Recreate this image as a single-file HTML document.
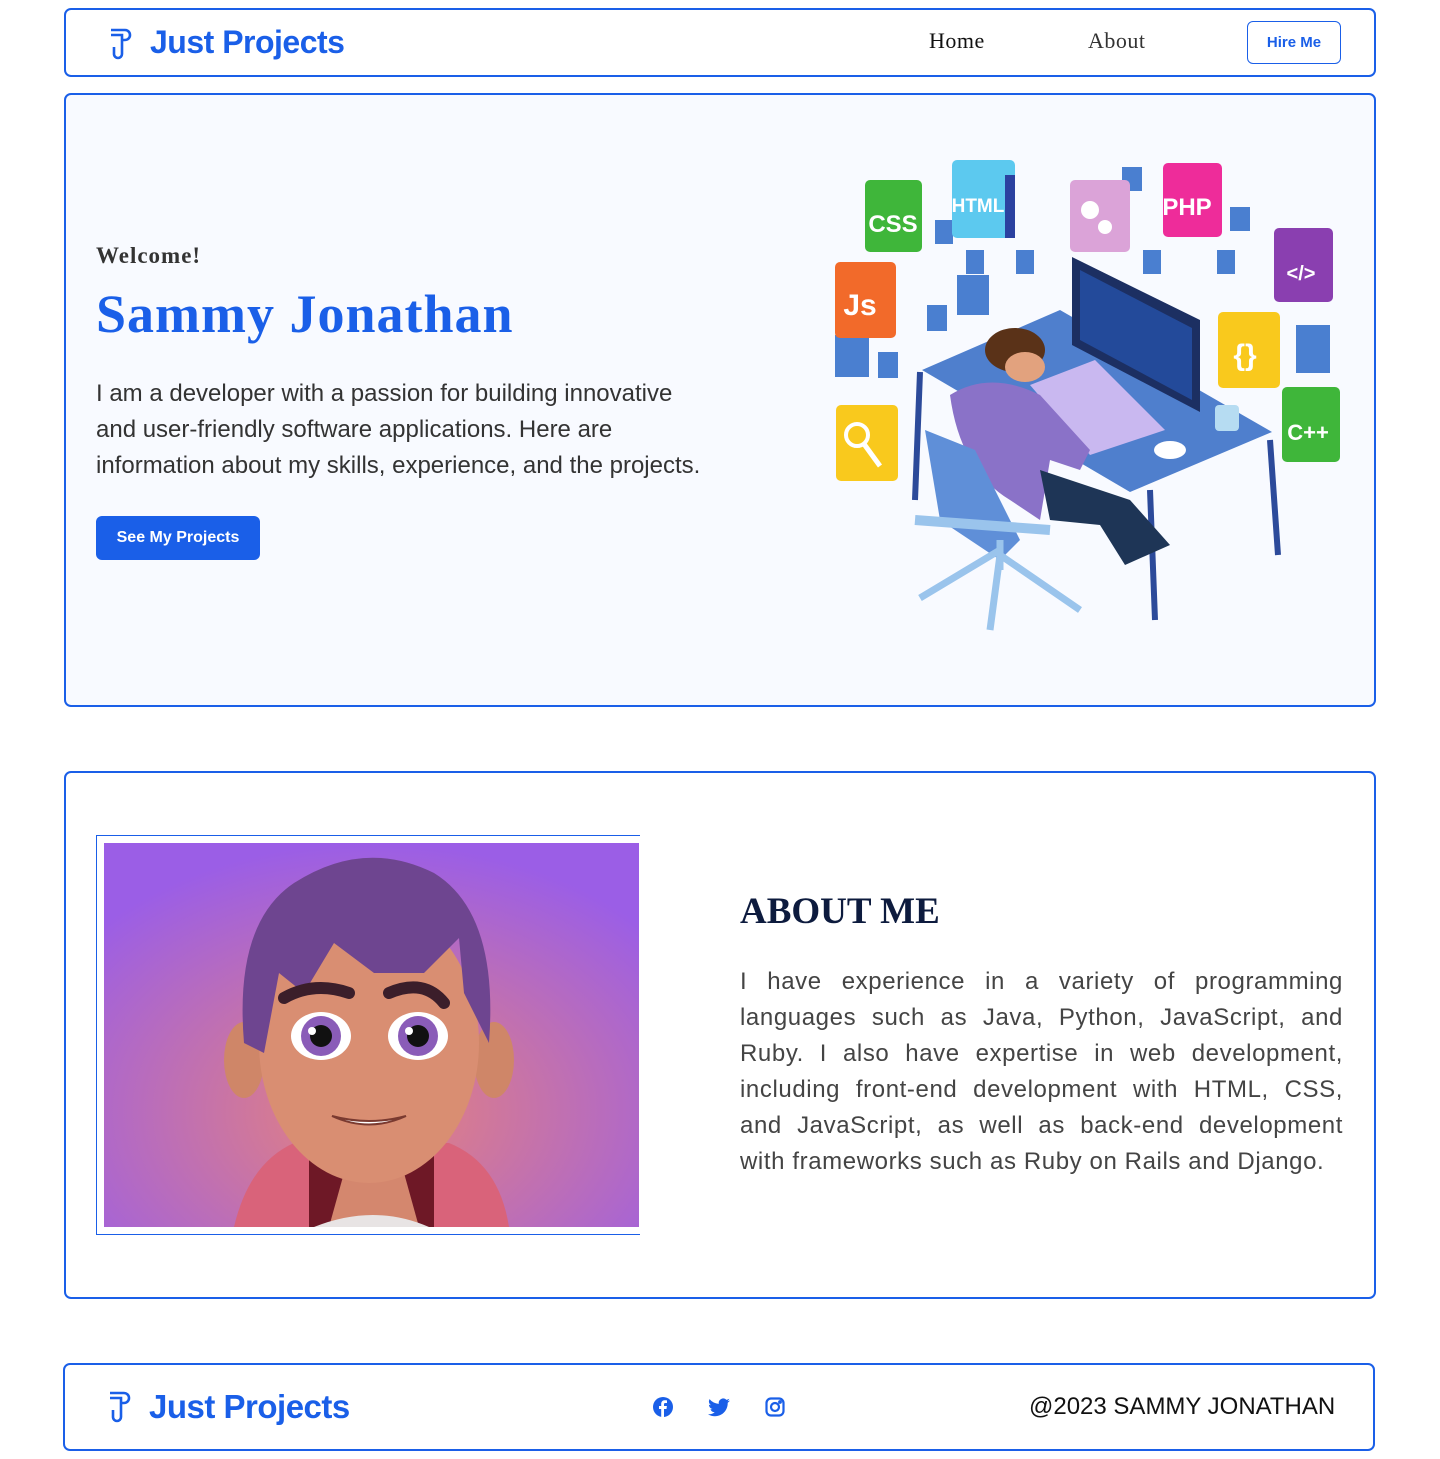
<!DOCTYPE html>
<html><head><meta charset="utf-8"><style>
*{margin:0;padding:0;box-sizing:border-box}
body{width:1440px;height:1459px;background:#fff;font-family:"Liberation Sans",sans-serif;position:relative;overflow:hidden}
.box{position:absolute;border:2px solid #1a5fe8;border-radius:7px}
.blue{color:#1a5fe8}
.serif{font-family:"Liberation Serif",serif}
.abs{position:absolute;white-space:nowrap}
</style></head><body>
<div class="box" style="left:64px;top:8px;width:1312px;height:69px"></div>
<svg class="abs" style="left:108px;top:27px" width="26" height="34" viewBox="0 0 26 34" fill="none" stroke="#1a5fe8" stroke-width="2.6"><path d="M3 3H17a5 5 0 0 1 0 10H14M3 8H14V27a4 4 0 0 1-8 0V20"/></svg>
<div class="abs blue" style="left:150px;top:24px;font-size:32px;font-weight:bold;letter-spacing:-0.5px">Just Projects</div>
<div class="abs serif" style="left:929px;top:28px;font-size:22px;color:#111;letter-spacing:0.5px">Home</div>
<div class="abs serif" style="left:1088px;top:28px;font-size:22px;color:#333;letter-spacing:0.5px">About</div>
<div class="abs blue" style="left:1247px;top:21px;width:94px;height:43px;border:1px solid #1a5fe8;border-radius:6px;font-size:15px;font-weight:bold;text-align:center;line-height:41px">Hire Me</div>

<div class="box" style="left:64px;top:93px;width:1312px;height:614px;background:#f8faff"></div>
<div class="abs serif" style="left:96px;top:243px;font-size:23px;font-weight:bold;color:#333;letter-spacing:1px">Welcome!</div>
<div class="abs serif blue" style="left:96px;top:283px;font-size:54px;font-weight:bold;letter-spacing:1px">Sammy Jonathan</div>
<div class="abs" style="left:96px;top:376px;font-size:24px;line-height:36px;color:#333">I am a developer with a passion for building innovative<br>and user-friendly software applications. Here are<br>information about my skills, experience, and the projects.</div>
<div class="abs" style="left:96px;top:516px;width:164px;height:44px;background:#1a5fe8;border-radius:6px;color:#fff;font-size:16px;font-weight:bold;text-align:center;line-height:44px">See My Projects</div>

<svg class="abs" style="left:0;top:0" width="1440" height="700" font-family="Liberation Sans" font-weight="bold">
<g fill="#4a7fd0">
<rect x="1122" y="167" width="20" height="24"/><rect x="935" y="220" width="18" height="24"/><rect x="966" y="250" width="18" height="24"/><rect x="1016" y="250" width="18" height="24"/><rect x="1143" y="250" width="18" height="24"/><rect x="1230" y="207" width="20" height="24"/><rect x="1217" y="250" width="18" height="24"/><rect x="957" y="275" width="32" height="40"/><rect x="927" y="305" width="20" height="26"/><rect x="835" y="335" width="34" height="42"/><rect x="878" y="352" width="20" height="26"/><rect x="1296" y="325" width="34" height="48"/>
</g>
<g>
<rect x="865" y="180" width="57" height="72" rx="5" fill="#3fb63a"/><text x="893" y="232" font-size="24" fill="#fff" text-anchor="middle">CSS</text>
<rect x="952" y="160" width="63" height="78" rx="5" fill="#5cc9ef"/><rect x="1005" y="175" width="10" height="63" fill="#2b41a0"/><text x="978" y="212" font-size="19" fill="#fff" text-anchor="middle">HTML</text>
<rect x="1070" y="180" width="60" height="72" rx="5" fill="#dba3d8"/><circle cx="1090" cy="210" r="9" fill="#fff"/><circle cx="1105" cy="227" r="7" fill="#fff"/>
<rect x="1163" y="163" width="59" height="74" rx="5" fill="#ee2c9a"/><text x="1187" y="215" font-size="24" fill="#fff" text-anchor="middle">PHP</text>
<rect x="1274" y="228" width="59" height="74" rx="5" fill="#8a3fb0"/><text x="1301" y="280" font-size="20" fill="#fff" text-anchor="middle">&lt;/&gt;</text>
<rect x="835" y="262" width="61" height="76" rx="5" fill="#f26a2a"/><text x="860" y="315" font-size="30" fill="#fff" text-anchor="middle">Js</text>
<rect x="1218" y="312" width="62" height="76" rx="5" fill="#f9c91d"/><text x="1245" y="365" font-size="30" fill="#fff" text-anchor="middle">{}</text>
<rect x="1282" y="387" width="58" height="75" rx="5" fill="#3fb63a"/><text x="1308" y="440" font-size="22" fill="#fff" text-anchor="middle">C++</text>
<rect x="836" y="405" width="62" height="76" rx="5" fill="#f9c91d"/><circle cx="857" cy="435" r="11" fill="none" stroke="#fff" stroke-width="4"/><path d="M864 444L880 466" stroke="#fff" stroke-width="5"/>
</g>
<path d="M922 370L1060 310L1272 432L1130 492Z" fill="#4f7fcd"/>
<path d="M920 372L915 500M1270 440L1278 555M1150 490L1155 620" stroke="#2c4a9a" stroke-width="6"/>
<path d="M1072 257L1200 320L1200 412L1072 345Z" fill="#1c2f62"/><path d="M1080 270L1192 328L1192 400L1080 340Z" fill="#234a9a"/>
<path d="M1030 385L1095 360L1165 430L1090 455Z" fill="#c9b8f0"/>
<path d="M950 395Q990 370 1040 395L1090 450L1080 470L1050 460L1040 520L1010 500Q960 470 950 395Z" fill="#8a72c8"/>
<ellipse cx="1015" cy="350" rx="30" ry="22" fill="#5a3218"/><ellipse cx="1025" cy="367" rx="20" ry="15" fill="#e2a27e"/>
<path d="M925 430L975 450L1020 540L1000 560L940 520Z" fill="#5f8fd8"/><path d="M915 520L1050 530" stroke="#9ac4ec" stroke-width="10"/>
<path d="M1000 550L920 598M1000 555L1080 610M1000 555L990 630M1000 540L1000 570" stroke="#9ac4ec" stroke-width="7"/>
<path d="M1040 470L1130 500L1170 545L1125 565L1100 525L1050 520Z" fill="#1e3556"/>
<ellipse cx="1170" cy="450" rx="16" ry="9" fill="#fff"/><rect x="1215" y="405" width="24" height="26" rx="4" fill="#b6dcf2"/>
</svg>

<div class="box" style="left:64px;top:771px;width:1312px;height:528px"></div>
<div class="abs" style="left:96px;top:835px;width:544px;height:400px;border-left:1px solid #1a5fe8;border-top:1px solid #1a5fe8;border-bottom:1px solid #1a5fe8"></div>
<svg class="abs" style="left:104px;top:843px" width="535" height="384" viewBox="0 0 535 384">
<defs><radialGradient id="bg" cx="50%" cy="70%" r="70%"><stop offset="0" stop-color="#e7837a"/><stop offset="1" stop-color="#9b5ee6"/></radialGradient></defs>
<rect width="535" height="384" fill="url(#bg)"/>
<path d="M130 384Q145 320 190 300L345 300Q395 320 405 384Z" fill="#d9637a"/>
<path d="M205 300L330 300L330 384L205 384Z" fill="#6e1826"/><path d="M225 384L240 330L300 330L315 384Z" fill="#d4876e"/><path d="M210 384Q270 360 325 384Z" fill="#e8e4e4"/>
<ellipse cx="140" cy="217" rx="20" ry="38" fill="#cf8668"/><ellipse cx="390" cy="217" rx="20" ry="38" fill="#cf8668"/>
<ellipse cx="265" cy="200" rx="110" ry="140" fill="#d98e72"/>
<path d="M140 200Q130 80 190 40Q260 -5 330 30Q395 70 385 200L360 150L355 95L320 130L270 130L230 100L200 150L175 130L160 210Z" fill="#6e4590"/>
<path d="M180 155Q210 138 245 150" stroke="#3b1e2a" stroke-width="12" fill="none" stroke-linecap="round"/><path d="M285 150Q320 135 340 160" stroke="#3b1e2a" stroke-width="12" fill="none" stroke-linecap="round"/>
<ellipse cx="217" cy="193" rx="30" ry="24" fill="#fff"/><circle cx="217" cy="193" r="20" fill="#8a5cb8"/><circle cx="217" cy="193" r="11" fill="#111"/><circle cx="208" cy="188" r="4" fill="#fff"/>
<ellipse cx="314" cy="193" rx="30" ry="24" fill="#fff"/><circle cx="314" cy="193" r="20" fill="#8a5cb8"/><circle cx="314" cy="193" r="11" fill="#111"/><circle cx="305" cy="188" r="4" fill="#fff"/>
<path d="M228 273Q265 290 302 273Q265 283 228 273Z" fill="#fff" stroke="#7a3a30" stroke-width="2"/>
</svg>
<div class="abs serif" style="left:740px;top:890px;font-size:37px;font-weight:bold;color:#0d1b3e">ABOUT ME</div>
<div class="abs" style="left:740px;top:964px;width:603px;font-size:24px;line-height:36px;color:#444;white-space:normal;text-align:justify;letter-spacing:0.6px">I have experience in a variety of programming languages such as Java, Python, JavaScript, and Ruby. I also have expertise in web development, including front-end development with HTML, CSS, and JavaScript, as well as back-end development with frameworks such as Ruby on Rails and Django.</div>

<div class="box" style="left:63px;top:1363px;width:1312px;height:88px"></div>
<svg class="abs" style="left:107px;top:1390px" width="26" height="34" viewBox="0 0 26 34" fill="none" stroke="#1a5fe8" stroke-width="2.6"><path d="M3 3H17a5 5 0 0 1 0 10H14M3 8H14V27a4 4 0 0 1-8 0V20"/></svg>
<div class="abs blue" style="left:149px;top:1388px;font-size:33px;font-weight:bold;letter-spacing:-0.5px">Just Projects</div>
<svg class="abs" style="left:653px;top:1397px" width="20" height="20" viewBox="0 0 20 20"><circle cx="10" cy="10" r="10" fill="#1a5fe8"/><path d="M11 20V12h2.5l.4-3H11V7.3c0-.8.3-1.3 1.4-1.3H14V3.4c-.3 0-1.2-.1-2.2-.1-2.2 0-3.6 1.3-3.6 3.7V9H6v3h2.2v8Z" fill="#fff"/></svg>
<svg class="abs" style="left:708px;top:1398px" width="22" height="19" viewBox="0 0 24 20"><path d="M24 2.4a10 10 0 0 1-2.8.8A5 5 0 0 0 23.3.5a10 10 0 0 1-3.1 1.2A4.9 4.9 0 0 0 11.8 6 14 14 0 0 1 1.7.9a4.9 4.9 0 0 0 1.5 6.6A4.9 4.9 0 0 1 1 6.9a4.9 4.9 0 0 0 3.9 4.8 5 5 0 0 1-2.2.1 4.9 4.9 0 0 0 4.6 3.4A9.9 9.9 0 0 1 0 17.3 14 14 0 0 0 7.5 19.5c9.1 0 14-7.5 14-14v-.6A10 10 0 0 0 24 2.4Z" fill="#1a5fe8"/></svg>
<svg class="abs" style="left:765px;top:1397px" width="20" height="20" viewBox="0 0 20 20" fill="none" stroke="#1a5fe8" stroke-width="2.2"><rect x="1.5" y="1.5" width="17" height="17" rx="4.5"/><circle cx="10" cy="10" r="4"/><circle cx="15" cy="5" r=".8" fill="#1a5fe8"/></svg>
<div class="abs" style="left:1029px;top:1393px;font-size:24px;color:#111">@2023 SAMMY JONATHAN</div>
</body></html>
